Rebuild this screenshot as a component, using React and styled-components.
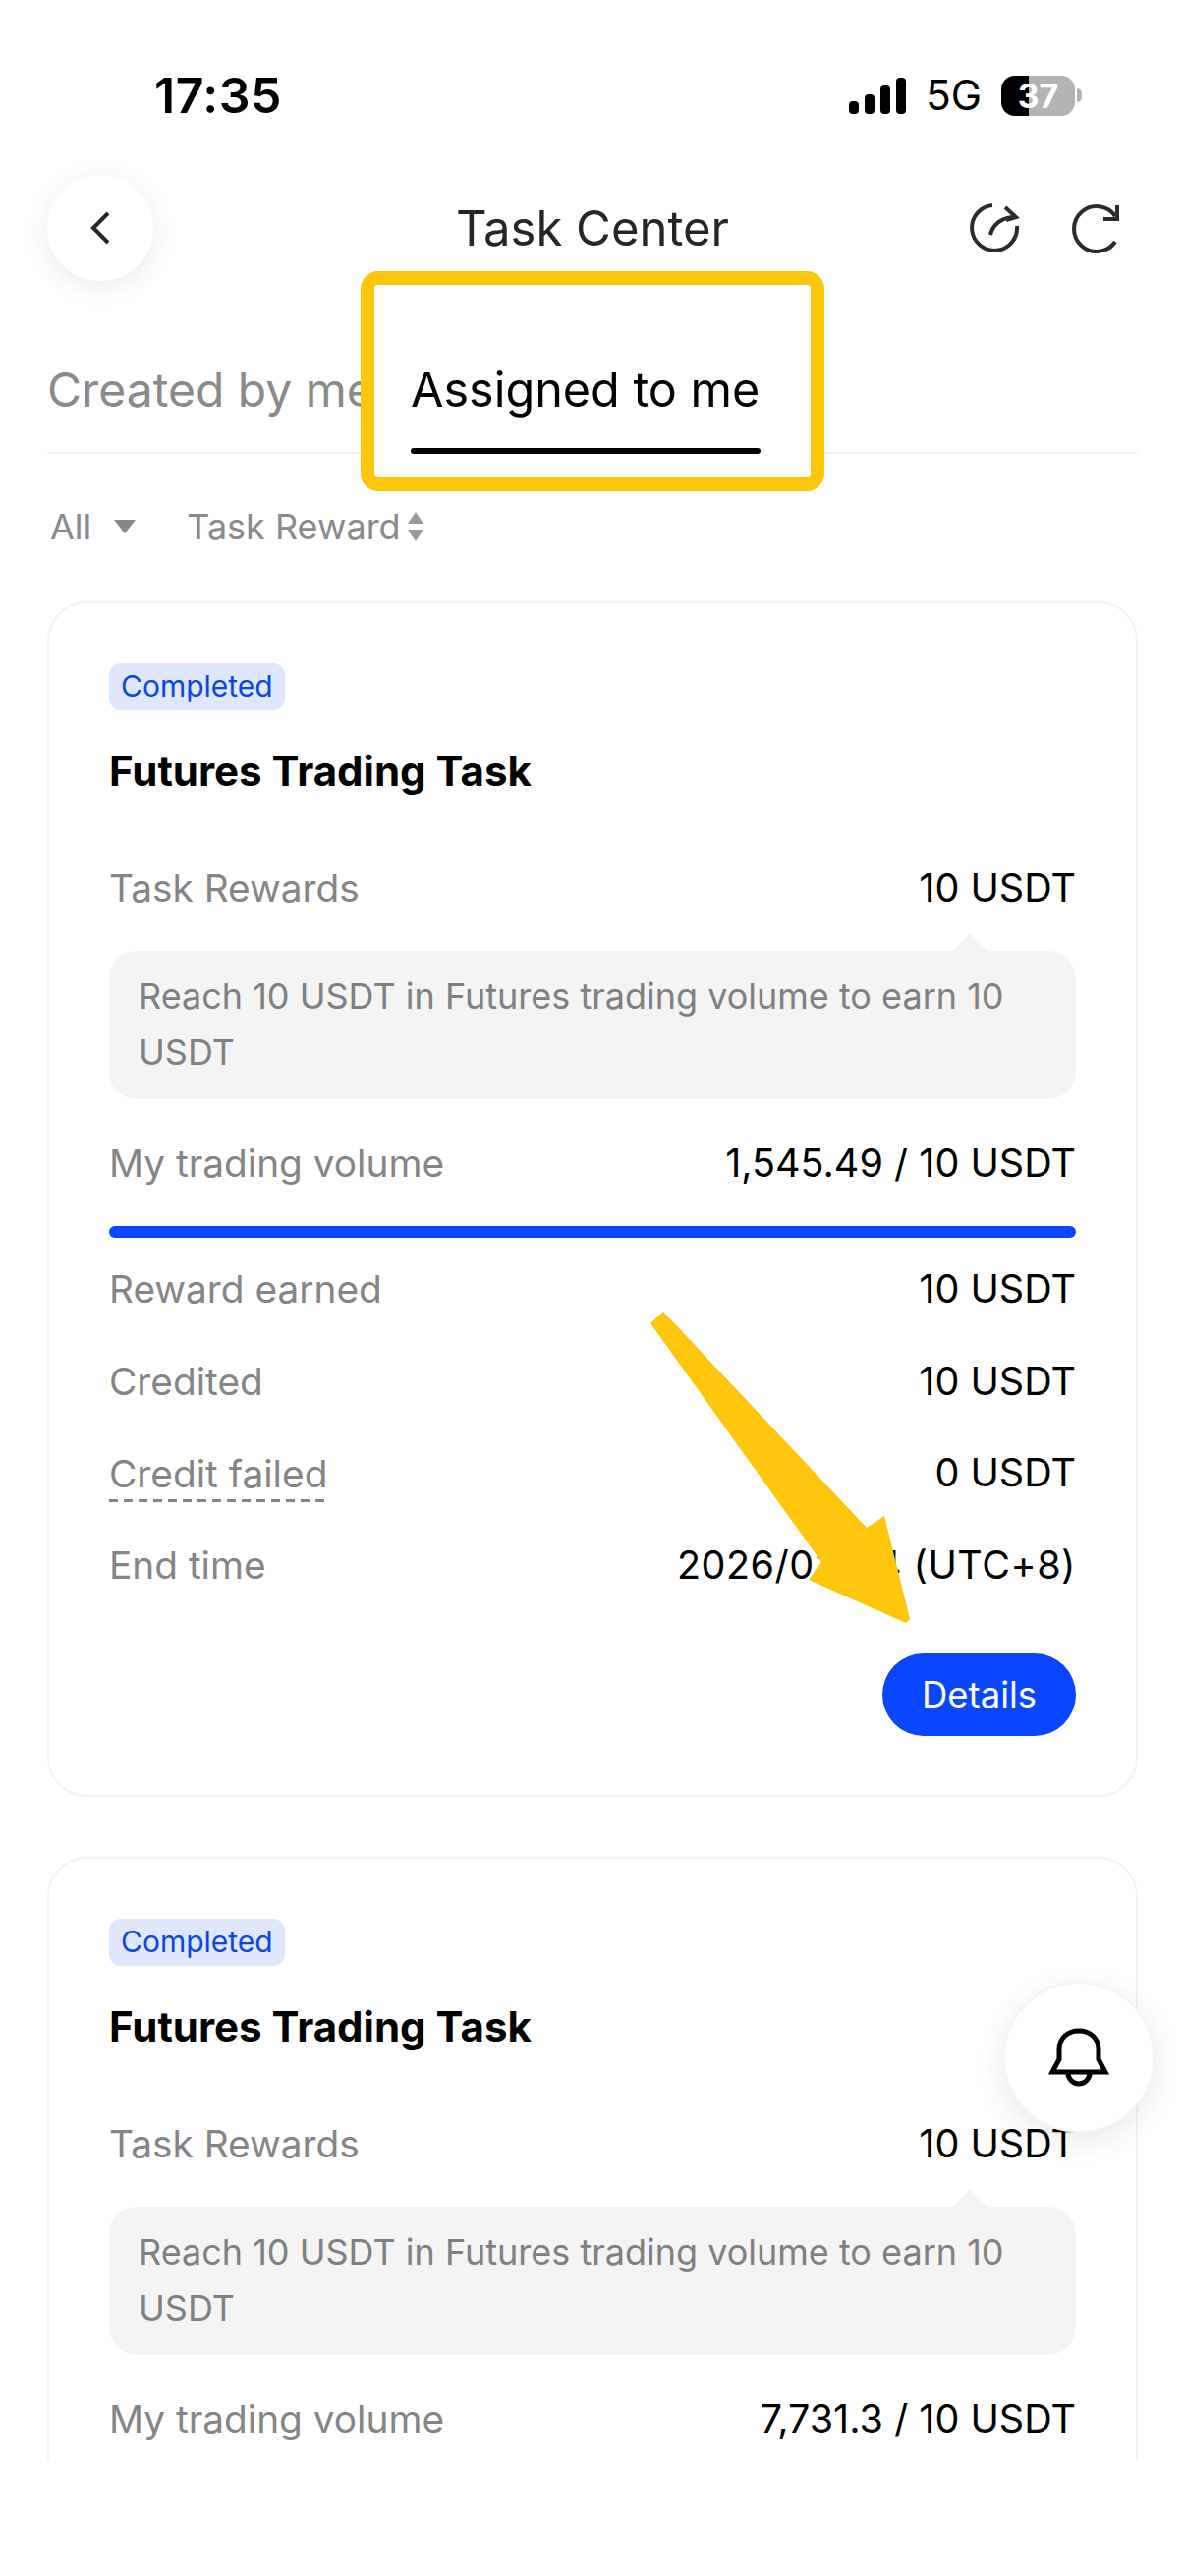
import React from "react";
import styled, { createGlobalStyle } from "styled-components";

const GlobalStyle = createGlobalStyle`
	html, body {
		margin: 0;
		padding: 0;
		background: #fff;
	}
	body {
		font-family: "Inter", "Liberation Sans", sans-serif;
	}
`;

const Page = styled.div`
	position: relative;
	width: 1206px;
	height: 2622px;
	overflow: hidden;
	background: #fff;
`;

const Screen = styled.div`
	height: 2505px;
	overflow: hidden;
	padding: 0 48px;
	box-sizing: border-box;
`;

const StatusBar = styled.div`
	display: flex;
	align-items: center;
	justify-content: space-between;
	height: 60px;
	padding: 67px 57px 0 109px;
`;

const Clock = styled.div`
	font-size: 50px;
	font-weight: 600;
	color: #000;
	letter-spacing: 0.5px;
`;

const StatusRight = styled.div`
	display: flex;
	align-items: center;
	gap: 20px;
`;

const Network = styled.span`
	font-size: 42px;
	color: #000;
	line-height: 1;
`;

const Battery = styled.div`
	position: relative;
	width: 75px;
	height: 41px;
	border-radius: 14px;
	overflow: hidden;
	display: flex;
	align-items: center;
	justify-content: center;
	background: linear-gradient(90deg, #000 0 28px, #b3b3b3 28px);
	color: #fff;
	font-size: 34px;
	font-weight: 700;
`;

const BatteryCap = styled.div`
	width: 5px;
	height: 14px;
	margin-left: -18px;
	border-radius: 0 6px 6px 0;
	background: #b3b3b3;
`;

const NavBar = styled.div`
	display: grid;
	grid-template-columns: 1fr auto 1fr;
	align-items: center;
	height: 108px;
	margin-top: 51px;
`;

const BackButton = styled.div`
	width: 108px;
	height: 108px;
	border-radius: 50%;
	background: #fff;
	box-shadow: 0 6px 26px rgba(0, 0, 0, 0.08);
	display: flex;
	align-items: center;
	justify-content: center;
`;

const Title = styled.div`
	font-size: 49px;
	color: #262626;
	line-height: 1;
`;

const NavIcons = styled.div`
	display: flex;
	justify-content: flex-end;
	align-items: center;
	gap: 50px;
	padding-right: 18px;
`;

const Tabs = styled.div`
	display: flex;
	align-items: flex-start;
	height: 94px;
	margin-top: 80px;
	border-bottom: 2px solid #f3f3f3;
	box-sizing: content-box;
`;

const Tab = styled.div`
	width: 370px;
	flex: none;
	font-size: 48px;
	line-height: 62px;
	color: #8a8a8a;
	white-space: nowrap;
`;

const ActiveTab = styled.div`
	position: relative;
	z-index: 1;
	flex: none;
	width: 356px;
	height: 96px;
	font-size: 48.5px;
	line-height: 62px;
	color: #000;
	white-space: nowrap;
	&::before {
		content: "";
		position: absolute;
		z-index: -1;
		top: -90px;
		left: -51px;
		right: -65px;
		bottom: -38px;
		border: 14px solid #ffc60b;
		border-radius: 18px;
		background: #fff;
	}
	&::after {
		content: "";
		position: absolute;
		left: 0;
		right: 0;
		bottom: 0;
		height: 6px;
		border-radius: 3px;
		background: #000;
	}
`;

const Filters = styled.div`
	display: flex;
	align-items: center;
	height: 44px;
	margin-top: 52px;
	padding-left: 3px;
	font-size: 36px;
	color: #8a8a8a;
`;

const FilterAll = styled.span`
	margin-right: 23px;
`;

const FilterReward = styled.span`
	margin-left: 52px;
	margin-right: 7px;
`;

const Cards = styled.div`
	display: flex;
	flex-direction: column;
	gap: 61px;
	margin-top: 54px;
`;

const Card = styled.div`
	border: 2px solid #f3f3f3;
	border-radius: 40px;
	padding: 61px 61px 60px;
	box-sizing: border-box;
	height: 1217px;
`;

const Badge = styled.div`
	display: inline-flex;
	align-items: center;
	height: 46px;
	padding: 0 12px 2px;
	border-radius: 12px;
	background: #dfe7fd;
	color: #0a46e6;
	font-size: 30px;
`;

const TaskName = styled.div`
	margin-top: 34px;
	font-size: 42px;
	font-weight: 700;
	line-height: 56px;
	color: #000;
`;

const Row = styled.div`
	display: flex;
	justify-content: space-between;
	align-items: center;
	height: 56px;
	margin-top: ${props => props.$top || 0}px;
`;

const Label = styled.span`
	font-size: 38.8px;
	color: #858585;
	line-height: 46px;
`;

const DashedLabel = styled(Label)`
	display: inline-block;
	padding: 8px 3px 6px 0;
	background: repeating-linear-gradient(90deg, #858585 0 9px, transparent 9px 15px) left bottom / 100% 3px no-repeat;
`;

const Value = styled.span`
	font-size: 39.5px;
	color: #000;
`;

const DateValue = styled(Value)`
	letter-spacing: 0.5px;
`;

const Note = styled.div`
	position: relative;
	margin-top: 36px;
	padding: 18px 30px 19px;
	border-radius: 28px;
	background: #f4f4f4;
	color: #808080;
	font-size: 36px;
	line-height: 57px;
	&::before {
		content: "";
		position: absolute;
		top: -18px;
		right: 90px;
		border-left: 18px solid transparent;
		border-right: 18px solid transparent;
		border-bottom: 18px solid #f4f4f4;
	}
`;

const Progress = styled.div`
	height: 12px;
	margin-top: 36px;
	border-radius: 6px;
	background: #0a46ff;
`;

const Stats = styled.div`
	display: flex;
	flex-direction: column;
	gap: 37.5px;
	margin-top: 24px;
`;

const Actions = styled.div`
	display: flex;
	justify-content: flex-end;
	margin-top: 62px;
`;

const DetailsButton = styled.div`
	width: 197px;
	height: 84px;
	border-radius: 42px;
	background: #0a46ff;
	color: #fff;
	font-size: 36.5px;
	display: flex;
	align-items: center;
	justify-content: center;
`;

const BellButton = styled.div`
	position: absolute;
	left: 1021px;
	top: 2017px;
	width: 154px;
	height: 154px;
	box-sizing: border-box;
	border: 2px solid #f5f5f5;
	border-radius: 50%;
	background: #fff;
	box-shadow: 0 8px 30px rgba(0, 0, 0, 0.09);
	display: flex;
	align-items: center;
	justify-content: center;
`;

const ArrowMark = styled.svg`
	position: absolute;
	left: 650px;
	top: 1325px;
`;

const cards = [
	{ volume: "1,545.49 / 10 USDT" },
	{ volume: "7,731.3 / 10 USDT" },
];

function TaskCard({ volume }) {
	return (
		<Card>
			<Badge>Completed</Badge>
			<TaskName>Futures Trading Task</TaskName>
			<Row $top={63}>
				<Label>Task Rewards</Label>
				<Value>10 USDT</Value>
			</Row>
			<Note>Reach 10 USDT in Futures trading volume to earn 10 USDT</Note>
			<Row $top={37}>
				<Label>My trading volume</Label>
				<Value>{volume}</Value>
			</Row>
			<Progress />
			<Stats>
				<Row>
					<Label>Reward earned</Label>
					<Value>10 USDT</Value>
				</Row>
				<Row>
					<Label>Credited</Label>
					<Value>10 USDT</Value>
				</Row>
				<Row>
					<DashedLabel>Credit failed</DashedLabel>
					<Value>0 USDT</Value>
				</Row>
				<Row>
					<Label>End time</Label>
					<DateValue>2026/02/24 (UTC+8)</DateValue>
				</Row>
			</Stats>
			<Actions>
				<DetailsButton>Details</DetailsButton>
			</Actions>
		</Card>
	);
}

export default function App() {
	return (
		<Page>
			<GlobalStyle />
			<Screen>
				<StatusBar>
					<Clock>17:35</Clock>
					<StatusRight>
						<svg width="58" height="37" viewBox="0 0 58 37">
							<rect x="0" y="24" width="10" height="13" rx="4" fill="#000" />
							<rect x="16" y="17" width="10" height="20" rx="4" fill="#000" />
							<rect x="32" y="8" width="10" height="29" rx="4" fill="#000" />
							<rect x="48" y="0" width="10" height="37" rx="4" fill="#000" />
						</svg>
						<Network>5G</Network>
						<Battery>37</Battery>
						<BatteryCap />
					</StatusRight>
				</StatusBar>
				<NavBar>
					<BackButton>
						<svg width="24" height="36" viewBox="0 0 24 36" fill="none">
							<path d="M20 3 L5 18 L20 33" stroke="#262626" strokeWidth="4" />
						</svg>
					</BackButton>
					<Title>Task Center</Title>
					<NavIcons>
						<svg width="52" height="52" viewBox="0 0 52 52" fill="none" stroke="#2b2b2b" strokeWidth="4">
							<path d="M24 3 A23 23 0 1 0 49 24" />
							<path d="M22 33 C24 24 32 15 47 15" />
							<path d="M37 5 L48 15 L38 18" />
						</svg>
						<svg width="52" height="52" viewBox="0 0 52 52" fill="none" stroke="#2b2b2b" strokeWidth="4">
							<path d="M47 40 A23 23 0 1 1 47 14" />
							<path d="M49 3 V17 H35" />
						</svg>
					</NavIcons>
				</NavBar>
				<Tabs>
					<Tab>Created by me</Tab>
					<ActiveTab>Assigned to me</ActiveTab>
				</Tabs>
				<Filters>
					<FilterAll>All</FilterAll>
					<svg width="22" height="14" viewBox="0 0 22 14">
						<path d="M0 0 H22 L11 14 Z" fill="#888" />
					</svg>
					<FilterReward>Task Reward</FilterReward>
					<svg width="16" height="30" viewBox="0 0 16 30">
						<path d="M8 0 L16 12 H0 Z M8 30 L0 18 H16 Z" fill="#999" />
					</svg>
				</Filters>
				<Cards>
					{cards.map(card => (
						<TaskCard key={card.volume} volume={card.volume} />
					))}
				</Cards>
			</Screen>
			<BellButton>
				<svg width="62" height="64" viewBox="0 0 62 64" fill="none" stroke="#000" strokeWidth="5">
					<path d="M4 47 L11 34 V24 C11 12 20 5 31 5 C42 5 51 12 51 24 V34 L58 47 Z" />
					<path d="M20 48 A11 11 0 0 0 42 48" />
				</svg>
			</BellButton>
			<ArrowMark width="290" height="340" viewBox="650 1325 290 340">
				<polygon points="675,1335 662,1347 836,1590 823,1608 922,1652 926,1648 900,1543 882,1555" fill="#ffc60b" />
			</ArrowMark>
		</Page>
	);
}
